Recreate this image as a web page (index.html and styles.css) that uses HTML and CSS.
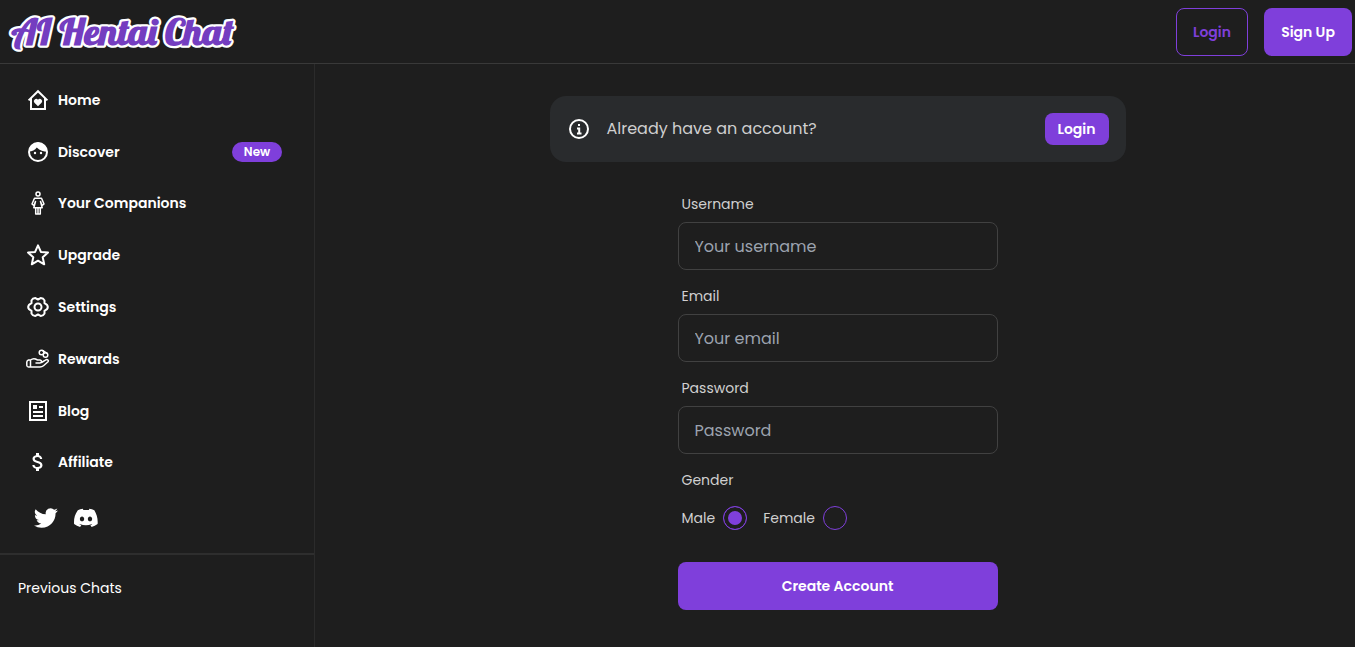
FILE: index.html
```html
<!DOCTYPE html>
<html lang="en">
<head>
    <meta charset="UTF-8">
    <meta name="viewport" content="width=device-width, initial-scale=1.0">
    <title>AI Hentai Chat</title>
    <link rel="stylesheet" href="styles.css">
</head>
<body>
    <header class="header">
        <a class="logo" href="#">
            <svg width="244" height="56" viewBox="0 0 244 56">
                <text class="logo-text" x="11.500" y="41" textLength="222" lengthAdjust="spacingAndGlyphs">AI Hentai Chat</text>
            </svg>
        </a>
        <div class="header-buttons">
            <button class="btn btn-outline">Login</button>
            <button class="btn btn-signup">Sign Up</button>
        </div>
    </header>

    <div class="page">
        <aside class="sidebar">
            <nav class="menu">
                <a class="menu-item" href="#">
                    <svg class="icon" viewBox="0 0 24 24"><path fill="none" stroke="currentColor" stroke-width="2" d="M2.600 12.400 12 3.200l9.400 9.200M5 10.500V21h14V10.500"/><path fill="currentColor" d="M12 18.200l-3.600-3.500a2.300 2.300 0 0 1 3.600-3 2.300 2.300 0 0 1 3.600 3z"/></svg>
                    <span>Home</span>
                </a>
                <a class="menu-item" href="#">
                    <svg class="icon" viewBox="0 0 24 24"><circle cx="12" cy="12" r="9" fill="none" stroke="currentColor" stroke-width="2"/><path fill="currentColor" d="M3 11.500C4 6 7.500 2.500 12 2.500s8.500 3.500 9.300 9.300C18 11.500 13.500 10.500 10.800 7.500 9 10.200 6 11.200 3 11.500z"/><circle cx="9" cy="13" r="1.200" fill="currentColor"/><circle cx="15" cy="13" r="1.200" fill="currentColor"/></svg>
                    <span>Discover</span>
                    <span class="badge">New</span>
                </a>
                <a class="menu-item" href="#">
                    <svg class="icon" viewBox="0 0 24 24" fill="none" stroke="currentColor" stroke-width="1.500" stroke-linejoin="round" stroke-linecap="round"><circle cx="12" cy="3" r="2"/><path d="M8.500 7.200h7l2.500 5.800-1.800 1.500-1.700-4 1.700 6.200H7.800l1.700-6.200-1.700 4L6 13zM9.700 16.700V23M12 16.700V23M14.300 16.700V23M9.700 23h4.600"/></svg>
                    <span>Your Companions</span>
                </a>
                <a class="menu-item" href="#">
                    <svg class="icon" viewBox="0 0 24 24"><path fill="none" stroke="currentColor" stroke-width="2" stroke-linejoin="round" d="m12 2.400 2.900 6.500 7.100.7-5.300 4.700 1.500 7-6.200-3.600-6.200 3.600 1.500-7L2 9.600l7.100-.7z"/></svg>
                    <span>Upgrade</span>
                </a>
                <a class="menu-item" href="#">
                    <svg class="icon" viewBox="0 0 24 24" fill="none" stroke="currentColor" stroke-width="2" stroke-linejoin="round"><path d="M18.500 8.200 21 9.800Q22.600 12 21 14.200L18.500 15.800 18.500 18.600Q17.300 21 14.600 20.900L12 19.500 9.400 20.900Q6.700 21 5.500 18.600L5.500 15.800 3 14.200Q1.400 12 3 9.800L5.500 8.200 5.500 5.400Q6.700 3 9.400 3.100L12 4.500 14.600 3.100Q17.300 3 18.500 5.400z"/><circle cx="12" cy="12" r="3.500"/></svg>
                    <span>Settings</span>
                </a>
                <a class="menu-item" href="#">
                    <svg class="icon" viewBox="0 0 24 24" fill="none" stroke="currentColor" stroke-width="1.500" stroke-linejoin="round" stroke-linecap="round"><path d="M4.500 13H2.500Q1 13.500.8 15v3.500Q1 20 2.500 20H14q2 0 3.500-1.300l4.500-3.900q.9-1.200-.3-2-1-.6-2.300.3L15.500 15.500M4.500 13q2.500-2 5-1l2 1H14q1.600.2 1.500 1.500T14 16h-4M4.500 13v6.500"/><circle cx="15.500" cy="5.500" r="2.300"/><circle cx="19.500" cy="8" r="2.300"/><path d="m16.800 3.600 4 2.500"/></svg>
                    <span>Rewards</span>
                </a>
                <a class="menu-item" href="#">
                    <svg class="icon" viewBox="0 0 24 24"><path fill="none" stroke="currentColor" stroke-width="2" d="M4 3h16v18H4zM7 13h10M7 17h10M13 8h4"/><path fill="currentColor" d="M7 6h4v4H7z"/></svg>
                    <span>Blog</span>
                </a>
                <a class="menu-item" href="#">
                    <svg class="icon" viewBox="0 0 24 24"><path fill="currentColor" d="M11.800 10.900c-2.270-.59-3-1.200-3-2.150 0-1.090 1.010-1.850 2.700-1.850 1.780 0 2.440.85 2.500 2.100h2.210c-.07-1.720-1.120-3.300-3.210-3.810V3h-3v2.160c-1.940.42-3.500 1.680-3.500 3.610 0 2.310 1.910 3.460 4.700 4.130 2.500.6 3 1.480 3 2.410 0 .69-.49 1.790-2.700 1.790-2.060 0-2.870-.92-2.980-2.100h-2.200c.12 2.190 1.760 3.420 3.680 3.830V21h3v-2.150c1.950-.37 3.500-1.500 3.500-3.550 0-2.840-2.430-3.810-4.700-4.400z"/></svg>
                    <span>Affiliate</span>
                </a>
            </nav>

            <div class="social">
                <a href="#"><svg class="icon" viewBox="0 0 24 24"><path fill="currentColor" d="M23.950 4.570a10 10 0 0 1-2.820.78 4.960 4.960 0 0 0 2.160-2.730c-.95.560-2 .96-3.130 1.190a4.920 4.920 0 0 0-8.380 4.480C7.690 8.100 4.070 6.130 1.640 3.160a4.920 4.920 0 0 0 1.520 6.570 4.900 4.900 0 0 1-2.230-.61v.06a4.920 4.920 0 0 0 3.950 4.830 5 5 0 0 1-2.210.08 4.940 4.940 0 0 0 4.600 3.420A9.870 9.870 0 0 1 0 19.540a13.990 13.990 0 0 0 7.560 2.210c9.050 0 14-7.500 14-13.980 0-.21 0-.42-.02-.63a9.940 9.940 0 0 0 2.410-2.570z"/></svg></a>
                <a href="#"><svg class="icon" viewBox="0 0 24 24"><path fill="currentColor" fill-rule="evenodd" d="M20.320 4.370a19.800 19.800 0 0 0-4.890-1.520c-.21.380-.45.880-.61 1.250a18.300 18.300 0 0 0-5.490 0c-.16-.39-.41-.88-.62-1.250a19.700 19.700 0 0 0-4.890 1.520C.53 9.050-.32 13.580.1 18.060a19.900 19.900 0 0 0 5.990 3.030c.46-.63.87-1.300 1.230-1.990a13 13 0 0 1-1.870-.9l.37-.29c3.930 1.790 8.180 1.790 12.060 0l.37.29c-.6.35-1.220.65-1.870.89.36.7.77 1.370 1.220 2a19.800 19.800 0 0 0 6-3.030c.5-5.180-.84-9.670-3.280-13.690zM8.020 15.330c-1.180 0-2.160-1.080-2.160-2.420s.96-2.420 2.160-2.420c1.210 0 2.180 1.090 2.160 2.420 0 1.340-.96 2.420-2.160 2.420zm7.970 0c-1.180 0-2.150-1.080-2.150-2.420s.95-2.420 2.150-2.420c1.210 0 2.180 1.090 2.160 2.420 0 1.340-.95 2.420-2.160 2.420z"/></svg></a>
            </div>

            <div class="previous">Previous Chats</div>
        </aside>

        <main class="main">
            <div class="notice">
                <svg class="icon" viewBox="0 0 24 24"><circle cx="12" cy="12" r="9" fill="none" stroke="currentColor" stroke-width="2"/><path fill="none" stroke="currentColor" stroke-width="2" d="M10 11.500h2.200V16M10 16.500h4.500M11 8h2"/></svg>
                <span class="notice-text">Already have an account?</span>
                <button class="btn btn-small">Login</button>
            </div>

            <form class="signup">
                <label class="label" for="username">Username</label>
                <input class="input" type="text" id="username" placeholder="Your username">
                <label class="label" for="email">Email</label>
                <input class="input" type="text" id="email" placeholder="Your email">
                <label class="label" for="password">Password</label>
                <input class="input" type="password" id="password" placeholder="Password">
                <div class="label">Gender</div>
                <div class="genders">
                    <label class="gender">Male<input class="radio" type="radio" name="gender" checked></label>
                    <label class="gender">Female<input class="radio" type="radio" name="gender"></label>
                </div>
                <button class="btn" type="button">Create Account</button>
            </form>
        </main>
    </div>
</body>
</html>
```

FILE: styles.css
```css
* {
    box-sizing: border-box;
}

body {
    margin: 0;
    height: 100vh;
    overflow: hidden;
    display: flex;
    flex-direction: column;
    background-color: #1e1e1e;
    color: #fff;
    font-family: Poppins, Inter, sans-serif;
    font-size: 14px;
    line-height: 20px;
}

a {
    color: inherit;
    text-decoration: none;
}

.icon {
    display: block;
    width: 24px;
    height: 24px;
    flex: none;
}

.header {
    display: flex;
    align-items: center;
    justify-content: space-between;
    height: 64px;
    padding-right: 3px;
    border-bottom: 1px solid #393939;
}

.logo svg {
    display: block;
}

.logo-text {
    font-family: Lobster, "Liberation Serif", serif;
    font-size: 35px;
    font-weight: bold;
    fill: #743dc0;
    stroke: #fff;
    stroke-width: 4.5px;
    stroke-linejoin: round;
    paint-order: stroke;
}

.header-buttons {
    display: flex;
    gap: 16px;
}

.btn {
    height: 48px;
    padding: 0;
    border: 0;
    border-radius: 8px;
    background-color: #7f3fdb;
    color: #fff;
    font-family: inherit;
    font-size: 14px;
    font-weight: 600;
    line-height: 14px;
}

.btn-outline {
    width: 72px;
    border: 1px solid #7f3fdb;
    background-color: transparent;
    color: #7f3fdb;
}

.btn-signup {
    width: 88px;
}

.page {
    flex: 1;
    display: flex;
}

.sidebar {
    width: 315px;
    border-right: 1px solid #2b2b2b;
}

.menu {
    padding: 10px 32px 0 26px;
}

.menu-item {
    display: flex;
    align-items: center;
    gap: 8px;
    height: 51.8px;
    font-weight: 600;
}

.badge {
    width: 50px;
    height: 20px;
    margin-left: auto;
    border-radius: 10px;
    background-color: #7f3fdb;
    font-size: 12px;
    text-align: center;
}

.social {
    display: flex;
    gap: 16px;
    height: 67px;
    padding: 18px 0 0 34px;
    border-bottom: 2px solid #2e2e2e;
}

.previous {
    padding: 23px 18px;
}

.main {
    flex: 1;
    display: flex;
    flex-direction: column;
    align-items: center;
    padding: 32px 0 0 5px;
}

.notice {
    display: flex;
    align-items: center;
    gap: 16px;
    width: 576px;
    height: 66px;
    padding: 0 17px;
    border-radius: 16px;
    background-color: #292b2d;
}

.notice-text {
    flex: 1;
    color: #cfcfcf;
    font-size: 16px;
}

.btn-small {
    width: 64px;
    height: 32px;
}

.signup {
    display: flex;
    flex-direction: column;
    width: 320px;
    margin-top: 24px;
}

.label {
    padding: 8px 4px;
    color: #d0d0d0;
}

.input {
    height: 48px;
    margin: 0 0 8px;
    padding: 0 16px;
    border: 1px solid #414141;
    border-radius: 8px;
    background-color: transparent;
    color: #fff;
    font-family: inherit;
    font-size: 16px;
}

.input::placeholder {
    color: #9ca3af;
}

.genders {
    display: flex;
    gap: 16px;
    padding: 8px 4px 32px;
}

.gender {
    display: flex;
    align-items: center;
    gap: 8px;
    color: #d0d0d0;
}

.radio {
    appearance: none;
    width: 24px;
    height: 24px;
    margin: 0;
    border: 1px solid #7f3fdb;
    border-radius: 50%;
}

.radio:checked {
    background-color: #7f3fdb;
    box-shadow: 0 0 0 4px #1e1e1e inset;
}
```
